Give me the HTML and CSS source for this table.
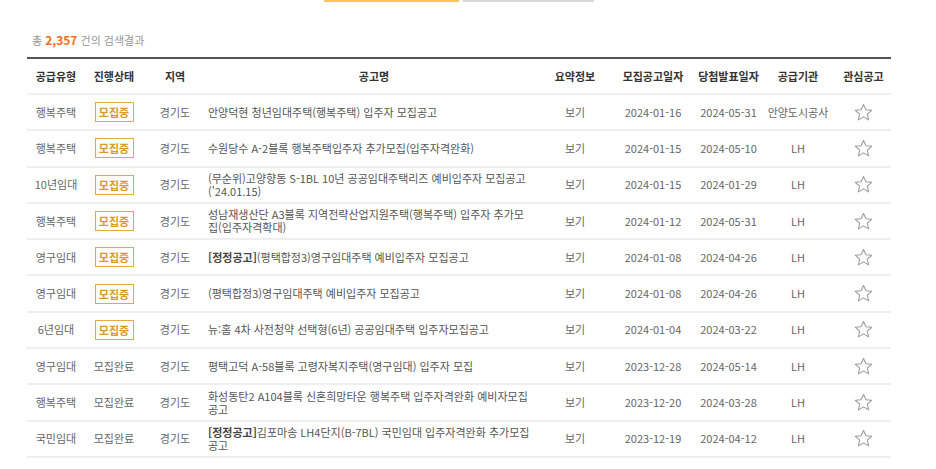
FILE: index.html
```html
<!DOCTYPE html>
<html lang="ko">
<head>
<meta charset="utf-8">
<title>공고 검색결과</title>
<link rel="stylesheet" href="styles.css">
</head>
<body>
<div class="wrap">
  <div class="btns">
    <span class="btn btn-primary"></span>
    <span class="btn btn-default"></span>
  </div>
  <p class="count">총 <strong>2,357</strong> 건의 검색결과</p>
  <table class="list">
    <colgroup>
      <col class="c1"><col class="c2"><col class="c3"><col class="c4"><col class="c5"><col class="c6"><col class="c7"><col class="c8"><col class="c9">
    </colgroup>
    <thead>
      <tr><th>공급유형</th><th>진행상태</th><th>지역</th><th>공고명</th><th>요약정보</th><th>모집공고일자</th><th>당첨발표일자</th><th>공급기관</th><th>관심공고</th></tr>
    </thead>
    <tbody>
      <tr><td>행복주택</td><td><span class="badge">모집중</span></td><td>경기도</td><td class="title">안양덕현 청년임대주택(행복주택) 입주자 모집공고</td><td>보기</td><td>2024-01-16</td><td>2024-05-31</td><td>안양도시공사</td><td><svg class="star" viewBox="0 0 20 20"><polygon points="10,1.5 12.6,7.2 18.6,7.7 14,11.7 15.4,17.8 10,14.6 4.6,17.8 6,11.7 1.4,7.7 7.4,7.2"/></svg></td></tr>
      <tr><td>행복주택</td><td><span class="badge">모집중</span></td><td>경기도</td><td class="title">수원당수 A-2블록 행복주택입주자 추가모집(입주자격완화)</td><td>보기</td><td>2024-01-15</td><td>2024-05-10</td><td>LH</td><td><svg class="star" viewBox="0 0 20 20"><polygon points="10,1.5 12.6,7.2 18.6,7.7 14,11.7 15.4,17.8 10,14.6 4.6,17.8 6,11.7 1.4,7.7 7.4,7.2"/></svg></td></tr>
      <tr><td>10년임대</td><td><span class="badge">모집중</span></td><td>경기도</td><td class="title">(무순위)고양향동 S-1BL 10년 공공임대주택리즈 예비입주자 모집공고('24.01.15)</td><td>보기</td><td>2024-01-15</td><td>2024-01-29</td><td>LH</td><td><svg class="star" viewBox="0 0 20 20"><polygon points="10,1.5 12.6,7.2 18.6,7.7 14,11.7 15.4,17.8 10,14.6 4.6,17.8 6,11.7 1.4,7.7 7.4,7.2"/></svg></td></tr>
      <tr><td>행복주택</td><td><span class="badge">모집중</span></td><td>경기도</td><td class="title">성남재생산단 A3블록 지역전략산업지원주택(행복주택) 입주자 추가모집(입주자격확대)</td><td>보기</td><td>2024-01-12</td><td>2024-05-31</td><td>LH</td><td><svg class="star" viewBox="0 0 20 20"><polygon points="10,1.5 12.6,7.2 18.6,7.7 14,11.7 15.4,17.8 10,14.6 4.6,17.8 6,11.7 1.4,7.7 7.4,7.2"/></svg></td></tr>
      <tr><td>영구임대</td><td><span class="badge">모집중</span></td><td>경기도</td><td class="title"><b>[정정공고]</b>(평택합정3)영구임대주택 예비입주자 모집공고</td><td>보기</td><td>2024-01-08</td><td>2024-04-26</td><td>LH</td><td><svg class="star" viewBox="0 0 20 20"><polygon points="10,1.5 12.6,7.2 18.6,7.7 14,11.7 15.4,17.8 10,14.6 4.6,17.8 6,11.7 1.4,7.7 7.4,7.2"/></svg></td></tr>
      <tr><td>영구임대</td><td><span class="badge">모집중</span></td><td>경기도</td><td class="title">(평택합정3)영구임대주택 예비입주자 모집공고</td><td>보기</td><td>2024-01-08</td><td>2024-04-26</td><td>LH</td><td><svg class="star" viewBox="0 0 20 20"><polygon points="10,1.5 12.6,7.2 18.6,7.7 14,11.7 15.4,17.8 10,14.6 4.6,17.8 6,11.7 1.4,7.7 7.4,7.2"/></svg></td></tr>
      <tr><td>6년임대</td><td><span class="badge">모집중</span></td><td>경기도</td><td class="title">뉴:홈 4차 사전청약 선택형(6년) 공공임대주택 입주자모집공고</td><td>보기</td><td>2024-01-04</td><td>2024-03-22</td><td>LH</td><td><svg class="star" viewBox="0 0 20 20"><polygon points="10,1.5 12.6,7.2 18.6,7.7 14,11.7 15.4,17.8 10,14.6 4.6,17.8 6,11.7 1.4,7.7 7.4,7.2"/></svg></td></tr>
      <tr><td>영구임대</td><td>모집완료</td><td>경기도</td><td class="title">평택고덕 A-58블록 고령자복지주택(영구임대) 입주자 모집</td><td>보기</td><td>2023-12-28</td><td>2024-05-14</td><td>LH</td><td><svg class="star" viewBox="0 0 20 20"><polygon points="10,1.5 12.6,7.2 18.6,7.7 14,11.7 15.4,17.8 10,14.6 4.6,17.8 6,11.7 1.4,7.7 7.4,7.2"/></svg></td></tr>
      <tr><td>행복주택</td><td>모집완료</td><td>경기도</td><td class="title">화성동탄2 A104블록 신혼희망타운 행복주택 입주자격완화 예비자모집공고</td><td>보기</td><td>2023-12-20</td><td>2024-03-28</td><td>LH</td><td><svg class="star" viewBox="0 0 20 20"><polygon points="10,1.5 12.6,7.2 18.6,7.7 14,11.7 15.4,17.8 10,14.6 4.6,17.8 6,11.7 1.4,7.7 7.4,7.2"/></svg></td></tr>
      <tr><td>국민임대</td><td>모집완료</td><td>경기도</td><td class="title"><b>[정정공고]</b>김포마송 LH4단지(B-7BL) 국민임대 입주자격완화 추가모집공고</td><td>보기</td><td>2023-12-19</td><td>2024-04-12</td><td>LH</td><td><svg class="star" viewBox="0 0 20 20"><polygon points="10,1.5 12.6,7.2 18.6,7.7 14,11.7 15.4,17.8 10,14.6 4.6,17.8 6,11.7 1.4,7.7 7.4,7.2"/></svg></td></tr>
    </tbody>
  </table>
</div>
</body>
</html>
```

FILE: styles.css
```css
* { box-sizing: border-box; }
html, body { margin: 0; padding: 0; background: #fff; }
body {
  font-family: "Noto Sans CJK KR", "Noto Sans", sans-serif;
  font-size: 11px;
  color: #666;
}
.wrap {
  width: 864px;
  margin-left: 27px;
}
.btns {
  display: flex;
  justify-content: center;
  gap: 4px;
  margin-top: -38px;
}
.btn {
  display: block;
  height: 40px;
}
.btn-primary {
  width: 135px;
  background: #fff;
  border: 2px solid #f8c45c;
}
.btn-default {
  width: 131px;
  background: #fff;
  border: 1px solid #d8d8d8;
  border-bottom-width: 2px;
}
.count {
  margin: 30px 0 9px 5px;
  font-size: 11px;
  line-height: 16px;
  color: #999;
}
.count strong {
  color: #f26c1d;
  font-weight: 700;
  font-size: 12px;
}
.list {
  width: 864px;
  table-layout: fixed;
  border-collapse: collapse;
  border-top: 2px solid #555;
}
.c1 { width: 58px; }
.c2 { width: 58px; }
.c3 { width: 64px; }
.c4 { width: 334px; }
.c5 { width: 68px; }
.c6 { width: 88px; }
.c7 { width: 63px; }
.c8 { width: 76px; }
.c9 { width: 55px; }
.list th {
  height: 36px;
  font-weight: 700;
  color: #333;
  text-align: center;
  border-bottom: 2px solid #f0f0f0;
  padding: 0;
  white-space: nowrap;
}
.list td {
  height: 36.3px;
  text-align: center;
  vertical-align: middle;
  border-bottom: 2px solid #efefef;
  padding: 0;
  line-height: 13px;
  white-space: nowrap;
}
.list td.title {
  text-align: left;
  padding: 0 9px 0 1px;
  white-space: normal;
  word-break: break-all;
  color: #555;
}
.title b {
  display: inline-block;
  color: #444;
  font-weight: 700;
}
.badge {
  display: inline-block;
  width: 39px;
  height: 20px;
  line-height: 18px;
  border: 1px solid #e2ab3c;
  color: #d99a22;
  font-weight: 700;
  text-align: center;
}
.star {
  width: 19px;
  height: 19px;
  display: block;
  margin: 0 auto;
  fill: none;
  stroke: #9a9a9a;
  stroke-width: 1.1;
  stroke-linejoin: round;
}
```
